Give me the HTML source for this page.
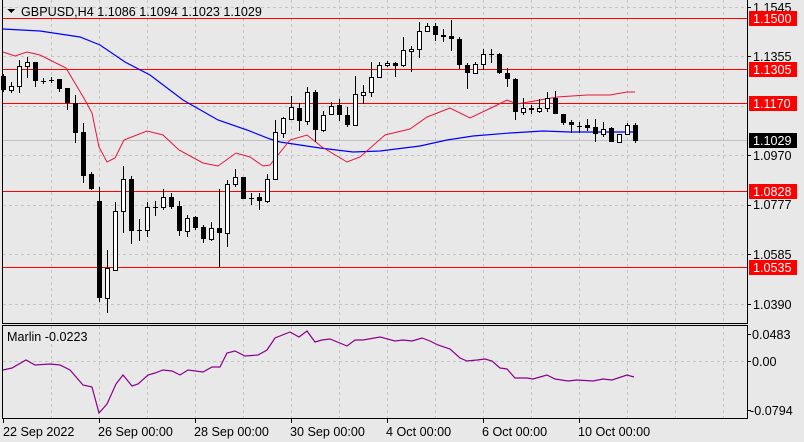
<!DOCTYPE html>
<html><head><meta charset="utf-8"><style>
html,body{margin:0;padding:0;background:#e8e8e8;}
svg{display:block;font-family:"Liberation Sans",Tahoma,sans-serif;font-size:12.6px;}
</style></head><body>
<svg width="804" height="442" viewBox="0 0 804 442" xmlns="http://www.w3.org/2000/svg" shape-rendering="crispEdges">
<rect width="804" height="442" fill="#e8e8e8"/>
<g stroke="#c4c4c4" stroke-dasharray="3,3" stroke-width="1">
<path d="M51.5 0V323M99.5 0V323M147.5 0V323M195.5 0V323M243.5 0V323M291.5 0V323M339.5 0V323M387.5 0V323M435.5 0V323M483.5 0V323M531.5 0V323M579.5 0V323M627.5 0V323M675.5 0V323M723.5 0V323"/>
<path d="M51.5 326V418M99.5 326V418M147.5 326V418M195.5 326V418M243.5 326V418M291.5 326V418M339.5 326V418M387.5 326V418M435.5 326V418M483.5 326V418M531.5 326V418M579.5 326V418M627.5 326V418M675.5 326V418M723.5 326V418"/>
<path d="M3 7.5H747M3 56.5H747M3 106.5H747M3 155.5H747M3 205.5H747M3 254.5H747M3 304.5H747M3 361.5H747"/>
</g>
<g stroke="#ff0000" stroke-width="1">
<path d="M3 18.5H747M3 69.5H747M3 103.5H747M3 191.5H747M3 267.5H747"/>
</g>
<path d="M3 140.5H747" stroke="#c0c0c0"/>
<g fill="none" shape-rendering="auto">
<polyline stroke="#0000ff" stroke-width="1.2" points="3,29 40,31 80,37 100,45 125,62 150,75 183,100 218,120 247,130 270,139 280,142 300,145 320,148 353,152 380,151 420,146 447,140 473,136 510,133 543,131 570,132 635,132"/>
<polyline stroke="#e8143c" stroke-width="1" points="3,52 15,56 27,52 40,55 66,68 85,100 92,113 99,147 107,162 115,158 124,140 147,131 163,135 179,150 203,163 218,166 236,153 250,157 263,166 270,165 290,140 307,135 322,147 347,162 360,157 385,135 410,129 427,117 450,108 470,118 493,107 507,100 517,104 540,100 557,97 587,95 610,95 627,92 635,92"/>
</g>
<path stroke="#000" stroke-width="1" d="M3.5 74V92M11.5 82V93M19.5 60V93M27.5 57V78M35.5 62V87M43.5 78V84M51.5 77V83M59.5 79V92M67.5 88V110M75.5 95V143M83.5 123V183M91.5 172V190M99.5 187V302M107.5 250V313M115.5 202V271M123.5 166V233M131.5 176V244M139.5 219V241M147.5 202V237M155.5 201V216M163.5 189V210M171.5 193V209M179.5 201V236M187.5 215V237M195.5 216V230M203.5 225V243M211.5 222V241M219.5 189V267M227.5 180V247M235.5 169V187M243.5 177V199M251.5 193V205M259.5 193V210M267.5 174V203M275.5 120V179M283.5 117V138M291.5 96V120M299.5 103V131M307.5 87V125M315.5 90V142M323.5 111V132M331.5 102V115M339.5 99V121M347.5 107V127M355.5 76V125M363.5 85V104M371.5 62V97M379.5 62V78M387.5 61V67M395.5 62V77M403.5 37V67M411.5 46V72M419.5 22V58M427.5 23V32M435.5 23V41M443.5 29V42M451.5 20V51M459.5 37V69M467.5 63V89M475.5 62V74M483.5 49V70M491.5 49V63M499.5 53V74M507.5 68V87M515.5 78V120M523.5 98V115M531.5 105V114M539.5 99V113M547.5 92V112M555.5 91V114M563.5 114V125M571.5 120V133M579.5 122V133M587.5 119V131M595.5 119V142M603.5 122V137M611.5 127V142M619.5 134V143M627.5 123V135M635.5 123V143"/>
<path stroke="#000" d="M41 81.5H46M49 80.5H54M137 230.5H142M153 207.5H158M249 198.5H254M489 54.5H494M577 126.5H582"/>
<path fill="#000" d="M1 76h5v14h-5zM33 62h5v19h-5zM57 79h5v10h-5zM65 88h5v15h-5zM73 103h5v30h-5zM81 132h5v44h-5zM89 174h5v15h-5zM97 201h5v97h-5zM129 179h5v52h-5zM169 197h5v10h-5zM177 206h5v25h-5zM193 217h5v11h-5zM201 227h5v12h-5zM217 228h5v5h-5zM241 177h5v22h-5zM257 197h5v4h-5zM297 108h5v13h-5zM313 92h5v38h-5zM337 105h5v10h-5zM345 115h5v10h-5zM393 63h5v3h-5zM433 26h5v9h-5zM441 35h5v2h-5zM449 36h5v3h-5zM457 39h5v26h-5zM465 65h5v8h-5zM497 54h5v19h-5zM505 73h5v6h-5zM513 79h5v33h-5zM529 108h5v2h-5zM553 98h5v16h-5zM561 114h5v9h-5zM569 122h5v3h-5zM585 125h5v3h-5zM593 127h5v7h-5zM609 128h5v14h-5zM633 125h5v16h-5z"/>
<path fill="#fff" stroke="#000" d="M9.5 86.5h4v4h-4zM17.5 66.5h4v20h-4zM25.5 62.5h4v4h-4zM105.5 268.5h4v30h-4zM113.5 211.5h4v59h-4zM121.5 179.5h4v32h-4zM145.5 207.5h4v23h-4zM161.5 197.5h4v10h-4zM185.5 218.5h4v13h-4zM209.5 228.5h4v11h-4zM225.5 184.5h4v49h-4zM233.5 177.5h4v7h-4zM265.5 179.5h4v22h-4zM273.5 132.5h4v47h-4zM281.5 118.5h4v15h-4zM289.5 107.5h4v12h-4zM305.5 92.5h4v29h-4zM321.5 115.5h4v15h-4zM329.5 106.5h4v8h-4zM353.5 94.5h4v31h-4zM361.5 92.5h4v3h-4zM369.5 77.5h4v15h-4zM377.5 65.5h4v12h-4zM385.5 63.5h4v2h-4zM401.5 50.5h4v15h-4zM409.5 49.5h4v2h-4zM417.5 31.5h4v18h-4zM425.5 26.5h4v5h-4zM473.5 64.5h4v9h-4zM481.5 54.5h4v10h-4zM521.5 108.5h4v4h-4zM537.5 108.5h4v3h-4zM545.5 98.5h4v10h-4zM601.5 129.5h4v5h-4zM617.5 134.5h4v8h-4zM625.5 125.5h4v9h-4z"/>
<polyline fill="none" stroke="#8b008b" stroke-width="1.2" shape-rendering="auto" points="3,370 12,368 26,360 35,365 50,364 60,365 70,370 83,385 92,387 99,413 107,404 116,384 123,375 132,386 138,384 148,375 155,373 163,370 172,371 180,375 188,370 203,372 212,367 220,367 227,353 235,351 245,356 258,355 267,350 275,338 290,332 299,337 307,331 315,342 322,340 330,339 347,346 355,340 363,340 380,337 395,341 403,340 412,341 422,338 430,341 438,345 450,349 460,358 467,361 477,360 485,359 492,361 500,368 507,369 515,378 527,378 533,379 540,377 547,375 555,379 568,381 577,380 593,381 603,379 612,380 627,375 634,377"/>
<g fill="none" stroke="#000" stroke-width="1">
<rect x="2.5" y="-1" width="745" height="324.5"/>
<rect x="2.5" y="325.5" width="745" height="93"/>
</g>
<path stroke="#000" d="M748 7.5h3M748 56.5h3M748 155.5h3M748 205.5h3M748 254.5h3M748 304.5h3M748 334.5h3M748 361.5h3M748 410.5h3M3.5 419v4M99.5 419v4M195.5 419v4M291.5 419v4M387.5 419v4M483.5 419v4M579.5 419v4"/>
<g fill="#000">
<text x="753" y="12">1.1545</text>
<text x="753" y="61">1.1355</text>
<text x="753" y="160">1.0970</text>
<text x="753" y="209">1.0777</text>
<text x="753" y="259">1.0585</text>
<text x="753" y="309">1.0390</text>
<text x="752" y="339">0.0483</text>
<text x="752" y="366">0.00</text>
<text x="750" y="415">-0.0794</text>
</g>
<g>
<rect x="749" y="11" width="48" height="15" fill="#ff0000"/>
<rect x="749" y="62" width="48" height="15" fill="#ff0000"/>
<rect x="749" y="96" width="48" height="15" fill="#ff0000"/>
<rect x="749" y="184" width="48" height="15" fill="#ff0000"/>
<rect x="749" y="260" width="48" height="15" fill="#ff0000"/>
<rect x="749" y="133" width="48" height="15" fill="#000"/>
</g>
<g fill="#fff">
<text x="753" y="23">1.1500</text>
<text x="753" y="74">1.1305</text>
<text x="753" y="108">1.1170</text>
<text x="753" y="145">1.1029</text>
<text x="753" y="196">1.0828</text>
<text x="753" y="272">1.0535</text>
</g>
<g fill="#000">
<text x="3" y="436">22 Sep 2022</text>
<text x="98" y="436">26 Sep 00:00</text>
<text x="194" y="436">28 Sep 00:00</text>
<text x="290" y="436">30 Sep 00:00</text>
<text x="386" y="436">4 Oct 00:00</text>
<text x="482" y="436">6 Oct 00:00</text>
<text x="578" y="436">10 Oct 00:00</text>
<text x="7" y="341">Marlin -0.0223</text>
</g>
<path d="M7 9h8l-4 4z" fill="#000"/>
<text x="21" y="16" fill="#000">GBPUSD,H4  1.1086 1.1094 1.1023 1.1029</text>
</svg>
</body></html>
